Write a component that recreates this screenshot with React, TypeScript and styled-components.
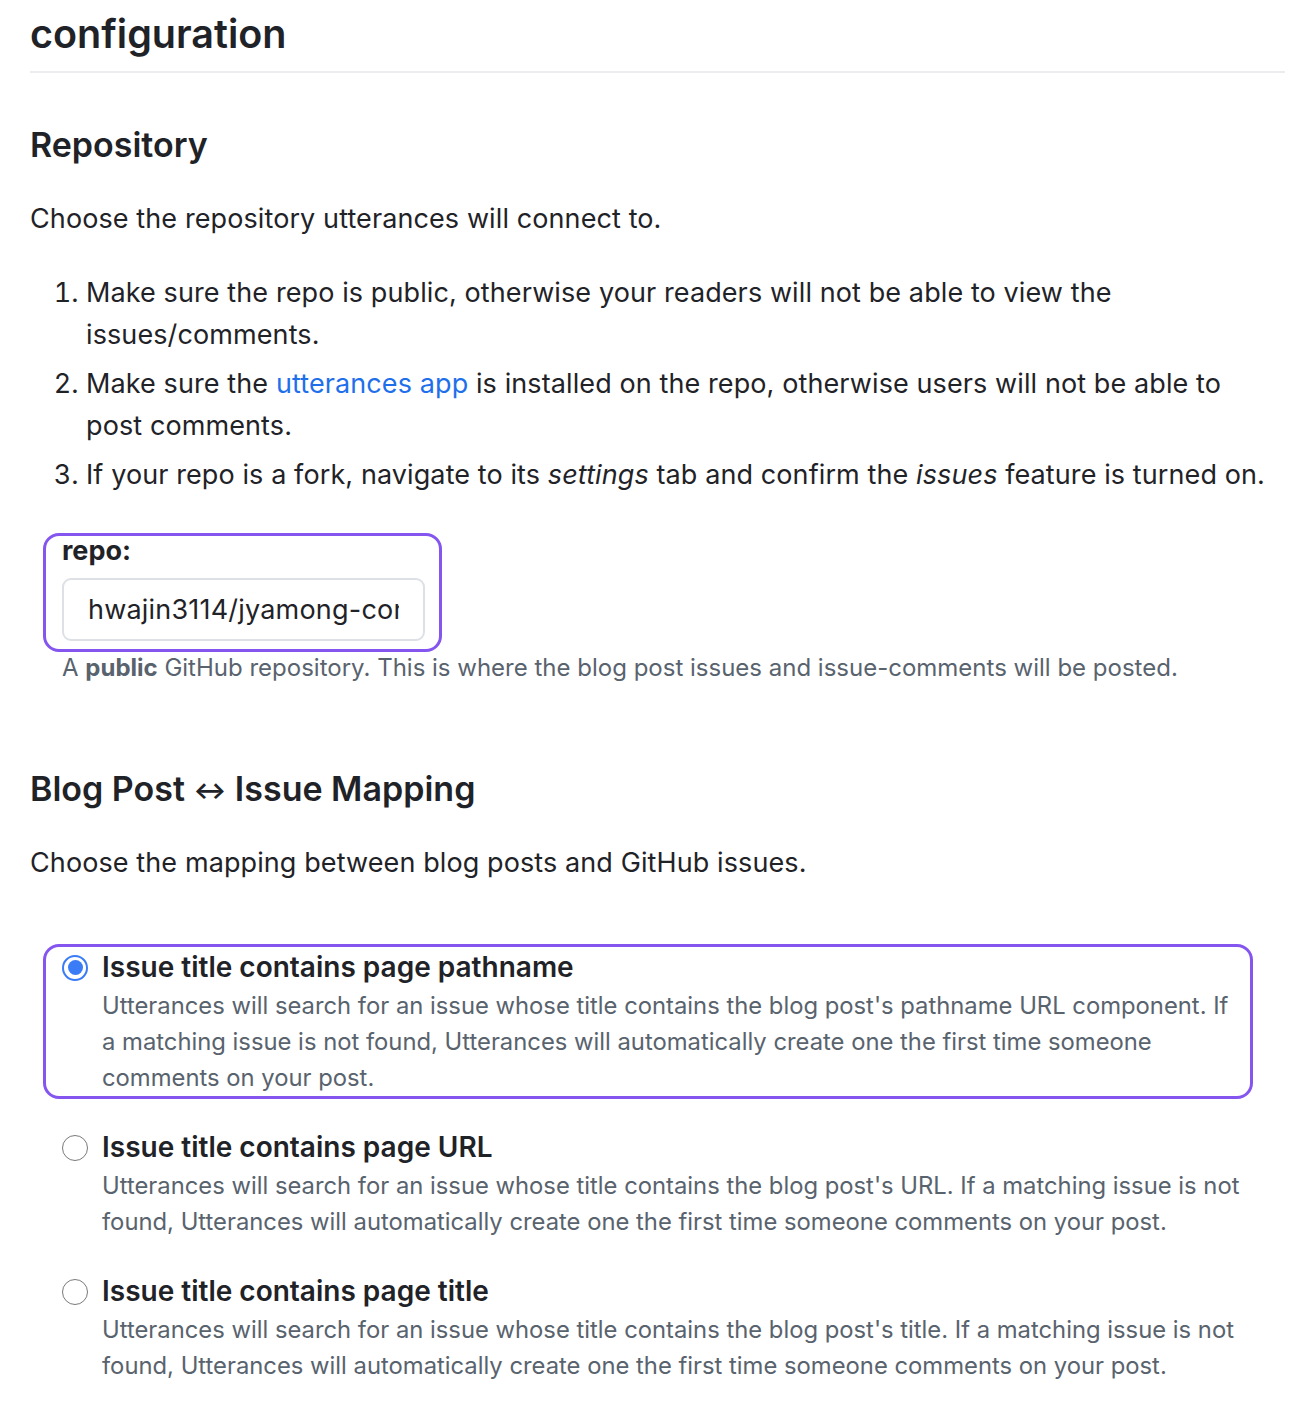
import React from "react";
import styled, { createGlobalStyle } from "styled-components";

const Global = createGlobalStyle`
  html, body { margin: 0; padding: 0; background: #ffffff; }
  body {
    font-family: Inter, "Noto Sans", "Liberation Sans", sans-serif;
    color: #1f2328;
    -webkit-font-smoothing: antialiased;
  }
`;

const Page = styled.main`
  width: 1255px;
  padding: 12px 5px 40px 30px;
`;

const Title = styled.h1`
  margin: 0;
  padding-bottom: 14px;
  font-size: 39.5px;
  font-weight: 600;
  line-height: 45px;
  border-bottom: 2px solid #ebecf0;
`;

const Heading = styled.h2<{ $gap: number }>`
  margin: ${(p) => p.$gap}px 0 0;
  font-size: 34px;
  font-weight: 600;
  line-height: 38px;
`;

const Arrow = styled.span`
  font-size: 0.72em;
  font-weight: 700;
  vertical-align: 0.1em;
`;

const Paragraph = styled.p<{ $gap: number }>`
  margin: ${(p) => p.$gap}px 0 0;
  font-size: 27px;
  letter-spacing: 0.1px;
  line-height: 42px;
`;

const Steps = styled.ol`
  margin: 32px 0 0;
  padding: 0 14px 0 56px;
  font-size: 27px;
  letter-spacing: 0.1px;
  line-height: 42px;
`;

const Step = styled.li`
  & + & { margin-top: 7px; }
`;

const Link = styled.a`
  color: #1f6feb;
  text-decoration: none;
`;

const FieldGroup = styled.div`
  margin-top: 37px;
  padding-left: 32px;
`;

const Highlight = styled.div`
  display: inline-flex;
  flex-direction: column;
  margin-left: -19px;
  padding: 0 14px 8px 16px;
  border: 3px solid #8455ef;
  border-radius: 16px;
`;

const Label = styled.label`
  font-size: 27px;
  font-weight: 700;
  line-height: 30px;
`;

const TextInput = styled.input`
  box-sizing: border-box;
  margin-top: 12px;
  width: 363px;
  height: 63px;
  padding: 0 24px;
  border: 2px solid #dde1e6;
  border-radius: 9px;
  font-family: inherit;
  font-size: 27px;
  letter-spacing: 0.2px;
  color: #1f2328;
  background: #ffffff;
  outline: none;
`;

const Note = styled.p`
  margin: 1px 0 0;
  font-size: 24px;
  line-height: 30px;
  color: #59636e;
  strong { font-weight: 700; }
`;

const Options = styled.div`
  margin: 60px 0 0 13px;
  width: 1210px;
  display: flex;
  flex-direction: column;
  gap: 25px;
`;

const Option = styled.label<{ $selected?: boolean }>`
  box-sizing: border-box;
  display: flex;
  gap: 14px;
  padding: 2px 2px 0 16px;
  border: 3px solid ${(p) => (p.$selected ? "#8455ef" : "transparent")};
  border-radius: 16px;
`;

const Radio = styled.span<{ $checked?: boolean }>`
  flex: none;
  box-sizing: border-box;
  width: 26px;
  height: 26px;
  margin-top: 6px;
  border-radius: 50%;
  border: ${(p) => (p.$checked ? "2.5px solid #3a7bf6" : "1.5px solid #7a7a7a")};
  background: #ffffff;
  display: flex;
  align-items: center;
  justify-content: center;
  &::after {
    content: "";
    display: ${(p) => (p.$checked ? "block" : "none")};
    width: 15px;
    height: 15px;
    border-radius: 50%;
    background: #3a7bf6;
  }
`;

const OptionBody = styled.span`
  display: flex;
  flex-direction: column;
  gap: 3px;
`;

const OptionTitle = styled.strong`
  font-size: 28px;
  font-weight: 600;
  line-height: 36px;
`;

const OptionText = styled.span`
  font-size: 23.8px;
  line-height: 36px;
  color: #59636e;
`;

const options = [
  {
    title: "Issue title contains page pathname",
    text: "Utterances will search for an issue whose title contains the blog post's pathname URL component. If a matching issue is not found, Utterances will automatically create one the first time someone comments on your post.",
    checked: true,
  },
  {
    title: "Issue title contains page URL",
    text: "Utterances will search for an issue whose title contains the blog post's URL. If a matching issue is not found, Utterances will automatically create one the first time someone comments on your post.",
  },
  {
    title: "Issue title contains page title",
    text: "Utterances will search for an issue whose title contains the blog post's title. If a matching issue is not found, Utterances will automatically create one the first time someone comments on your post.",
  },
];

export default function App() {
  return (
    <>
      <Global />
      <Page>
        <Title>configuration</Title>
        <Heading $gap={53}>Repository</Heading>
        <Paragraph $gap={34}>Choose the repository utterances will connect to.</Paragraph>
        <Steps>
          <Step>
            Make sure the repo is public, otherwise your readers will not be able to view the
            issues/comments.
          </Step>
          <Step>
            Make sure the <Link href="#">utterances app</Link> is installed on the repo, otherwise
            users will not be able to post comments.
          </Step>
          <Step>
            If your repo is a fork, navigate to its <em>settings</em> tab and confirm the{" "}
            <em>issues</em> feature is turned on.
          </Step>
        </Steps>
        <FieldGroup>
          <Highlight>
            <Label htmlFor="repo">repo:</Label>
            <TextInput id="repo" readOnly value="hwajin3114/jyamong-comments" />
          </Highlight>
          <Note>
            A <strong>public</strong> GitHub repository. This is where the blog post issues and
            issue-comments will be posted.
          </Note>
        </FieldGroup>
        <Heading $gap={87}>
          Blog Post <Arrow>↔</Arrow> Issue Mapping
        </Heading>
        <Paragraph $gap={33}>Choose the mapping between blog posts and GitHub issues.</Paragraph>
        <Options>
          {options.map((o) => (
            <Option key={o.title} $selected={o.checked}>
              <Radio $checked={o.checked} />
              <OptionBody>
                <OptionTitle>{o.title}</OptionTitle>
                <OptionText>{o.text}</OptionText>
              </OptionBody>
            </Option>
          ))}
        </Options>
      </Page>
    </>
  );
}
